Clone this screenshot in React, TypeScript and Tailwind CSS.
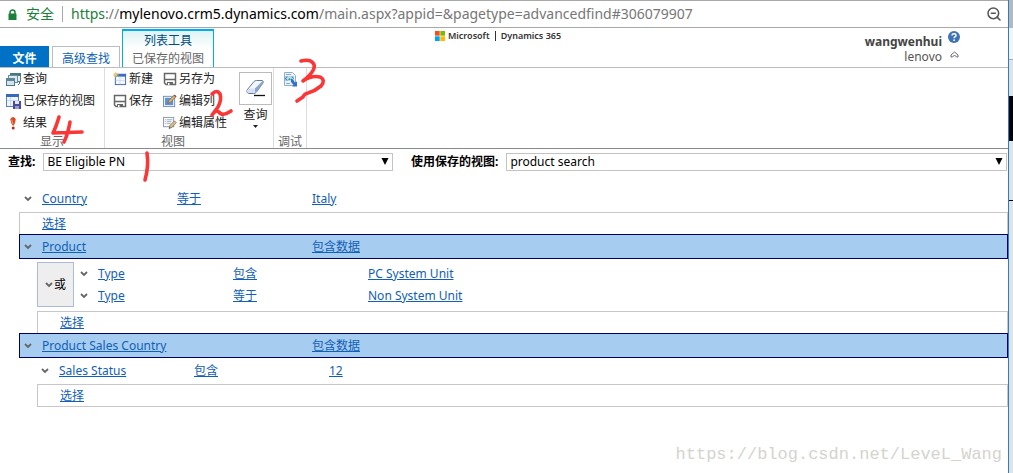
import type { ReactNode } from "react"
import { ZoomOut } from "lucide-react"

const WindowsIcon = () => (
  <svg width="15" height="15" viewBox="0 0 15 15" aria-hidden="true">
    <rect x="4.5" y="1.5" width="10" height="8" fill="#e8f0f4" stroke="#55808c" />
    <rect x="4" y="1" width="11" height="3" fill="#4a7584" />
    <rect x="2.5" y="3.5" width="9" height="7" fill="#dce9ee" stroke="#6b8f9a" />
    <rect x="0.5" y="6.5" width="8" height="7" fill="#d5e4ea" stroke="#4c7c8c" />
    <rect x="0" y="6" width="9" height="3" fill="#5d8797" />
    <path d="M12 9l2 2-2 2" stroke="#3c7a8c" fill="none" />
  </svg>
)

const SavedViewIcon = () => (
  <svg width="15" height="15" viewBox="0 0 15 15" aria-hidden="true">
    <rect x="0.5" y="0.5" width="12" height="12" fill="#eef4fb" stroke="#5e83c4" />
    <rect x="0" y="0" width="13" height="3" fill="#3868c0" />
    <path d="M4.5 3v9M1 6.5h11" stroke="#cbdaf0" />
    <rect x="7" y="7" width="8" height="8" fill="#4b4a9c" />
    <rect x="9" y="7" width="4" height="3" fill="#e6e6f6" />
    <rect x="9" y="12" width="4" height="3" fill="#9a9ad0" />
  </svg>
)

const ResultIcon = () => (
  <svg width="15" height="15" viewBox="0 0 15 15" aria-hidden="true">
    <path d="M4.3 3.5Q4.7 1 7 1T9.7 3.5Q9.3 7 7.8 9.5H6.6Q4.8 7 4.3 3.5z" fill="#dc4a24" />
    <path d="M5.8 3.6Q6 6 7 8" stroke="#f5a078" fill="none" />
    <circle cx="7.2" cy="12" r="1.5" fill="#b83018" />
  </svg>
)

const NewIcon = () => (
  <svg width="14" height="14" viewBox="0 0 15 15" aria-hidden="true">
    <rect x="2.5" y="2.5" width="11" height="11" fill="#f2f7fd" stroke="#3b62ac" />
    <rect x="2" y="2" width="12" height="3" fill="#3f6cc0" />
    <path d="M7.5 5v8M3 9h10" stroke="#cfdcf0" />
    <path d="M3 0v6M0 3h6M1 1l4 4M5 1L1 5" stroke="#edc85a" />
  </svg>
)

const DiskIcon = () => (
  <svg width="14" height="14" viewBox="0 0 14 14" aria-hidden="true">
    <path d="M1.5 1.5h11v11H3l-1.500-1.500z" fill="#fff" stroke="#666" strokeWidth="1.5" />
    <path d="M1.5 7.5h11" stroke="#666" strokeWidth="1.5" />
    <path d="M4 10h6v3H4z" fill="#666" />
    <path d="M5 11h1.5v2H5z" fill="#fff" />
  </svg>
)

const EditColumnIcon = () => (
  <svg width="14" height="14" viewBox="0 0 15 15" aria-hidden="true">
    <rect x="0.5" y="2.5" width="12" height="11" fill="#fff" stroke="#6b8cc0" />
    <rect x="2" y="4" width="9" height="8" fill="#5e92de" />
    <path d="M5 10l1.2-3L12 1.2l1.8 1.8L8 9z" fill="#dcb56c" stroke="#76582a" strokeWidth="0.7" />
    <path d="M12 1l2 2" stroke="#9c4b3c" strokeWidth="1.5" />
  </svg>
)

const EditPropsIcon = () => (
  <svg width="14" height="14" viewBox="0 0 15 15" aria-hidden="true">
    <rect x="0.5" y="1.5" width="11" height="10" fill="#f6f8fa" stroke="#8a97aa" />
    <path d="M2 4h1M4 4h6M2 6h1M4 6h5M2 8h1M4 8h4" stroke="#a2adbd" />
    <path d="M6.5 13.5l1-3.5 4.8-4.8 2 2L9.7 12z" fill="#d6bd8c" stroke="#74664c" strokeWidth="0.7" />
    <path d="M6.5 13.5l.5-1.6 1.1 1z" fill="#333" />
  </svg>
)

const EraserIcon = () => (
  <svg width="24" height="24" viewBox="0 0 24 24" aria-hidden="true">
    <path d="M3 13L10 4.5Q11 3.5 12.5 3.5H18Q20 4 19 6L12.5 15Q11.5 16.5 9.500 16.5H5Q2 16 3 13z" fill="#f3f7fc" stroke="#66799b" />
    <path d="M12.5 15L19 6Q19.5 4.5 18.5 4L11 11.5Q10.5 14 11 16.2z" fill="#8da5ca" />
    <path d="M3 13Q7 10.5 11 12L10.5 16H5Q2.5 15.5 3 13z" fill="#d5e0f0" />
    <path d="M10 18.5h11" stroke="#111" strokeWidth="1.3" />
  </svg>
)

const DebugIcon = () => (
  <svg width="15" height="15" viewBox="0 0 15 15" aria-hidden="true">
    <path d="M1.5 0.5h8l3 3v10h-11z" fill="#eaf3fb" stroke="#8bafd4" />
    <rect x="2" y="4" width="9" height="5" fill="#b5d9f0" />
    <path d="M4 4.5L2.5 6.5 4 8.5M9 4.5l1.5 2" stroke="#2f6496" fill="none" />
    <path d="M5 8l1.5-2L8 8z" fill="#3f9f55" />
    <path d="M3 11.5h4M3 2.5h5" stroke="#8bacca" />
    <path d="M8 6.5l2 1 2 3 2-1v5H9l1.5-1.5L8 10z" fill="#3470c8" />
  </svg>
)

const Chevron = () => (
  <svg width="8" height="6" viewBox="0 0 8 6" className="shrink-0" aria-hidden="true">
    <path d="M1 1l3 3 3-3" fill="none" stroke="#666" strokeWidth="1.8" />
  </svg>
)

function Tool({ icon, label }: { icon: ReactNode; label: string }) {
  return (
    <button className="flex h-[22px] shrink-0 items-center gap-0.5 whitespace-nowrap">
      {icon}
      {label}
    </button>
  )
}

function Picker({ id, value }: { id: string; value: string }) {
  return (
    <div className="relative flex-1">
      <select
        id={id}
        className="block h-[18px] w-full appearance-none border border-[#c3c3c3] bg-white pl-[3px] text-xs leading-4 text-black"
      >
        <option>{value}</option>
      </select>
      <svg
        width="8"
        height="7"
        viewBox="0 0 8 7"
        className="pointer-events-none absolute top-[5px] right-1"
        aria-hidden="true"
      >
        <path d="M0.5 0h7L4 7z" fill="#000" />
      </svg>
    </div>
  )
}

function Condition({ field, operator, value }: { field: string; operator?: string; value: string }) {
  return (
    <div className="flex h-[22px] items-center">
      <span className="flex w-[18px]">
        <Chevron />
      </span>
      <span className="w-[135px]">
        <a href="#" className="whitespace-nowrap underline">{field}</a>
      </span>
      <span className="w-[135px]">
        {operator && <a href="#" className="underline">{operator}</a>}
      </span>
      <a href="#" className="underline">{value}</a>
    </div>
  )
}

function Entity({ name }: { name: string }) {
  return (
    <div className="flex h-[25px] items-end border border-[#00005e] bg-[#a6ccf0] pl-1">
      <Condition field={name} value="包含数据" />
    </div>
  )
}

function SelectRow() {
  return (
    <div className="flex h-[22px] items-center border border-b-0 border-[#c6c6cb] pl-[22px]">
      <a href="#" className="underline">选择</a>
    </div>
  )
}

export default function App() {
  return (
    <div className="flex min-h-screen bg-white font-['Noto_Sans','Noto_Sans_CJK_SC',sans-serif] text-xs leading-4 text-[#222]">
      <main className="relative min-w-0 flex-1">
        <div className="flex h-7 items-center border-y border-[#a8a8a8] pr-1.5 pl-2">
          <svg width="9" height="11" viewBox="0 0 9 11" aria-hidden="true">
            <path d="M2 5V3.500a2.500 2.500 0 015 0V5" fill="none" stroke="#188038" strokeWidth="1.5" />
            <rect x="0.5" y="4.5" width="8" height="6.5" rx="0.5" fill="#188038" />
          </svg>
          <span className="ml-[9px] text-sm text-[#188038]">安全</span>
          <span className="mx-2 h-4 w-px bg-[#aaa]" />
          <span className="text-sm whitespace-nowrap text-[#777]">
            <span className="text-[#188038]">https</span>://<span className="text-black">mylenovo.crm5.dynamics.com</span>
            /main.aspx?appid=&amp;pagetype=advancedfind#306079907
          </span>
          <ZoomOut className="ml-auto text-[#555]" size={16} strokeWidth={2.3} />
        </div>

        <header className="flex h-10 border-b border-[#b9bdc2]">
          <nav className="flex flex-1 items-end gap-[3px]">
            <button className="h-[21px] w-[49px] bg-[#0072c6] pt-1 font-bold text-white">文件</button>
            <button className="h-[21px] w-[68px] border border-b-0 border-[#b9bdc2] pt-1 text-[#0a64b4]">高级查找</button>
            <button className="-ml-px h-[38px] w-[92px] border border-t-2 border-b-0 border-[#00aeef] bg-linear-to-b from-[#dff3f3] to-white to-50% text-[#666]">
              <span className="block h-[19px] leading-[20px] text-[#004b85]">列表工具</span>
              <span className="block leading-[18px]">已保存的视图</span>
            </button>
          </nav>
          <div className="ml-9 flex items-center gap-[3px] self-start text-[9px] leading-4 font-semibold text-[#333]">
            <svg width="10" height="10" viewBox="0 0 10 10" aria-hidden="true">
              <path d="M0 0h4.700v4.700H0z" fill="#f25022" />
              <path d="M5.300 0H10v4.700H5.300z" fill="#7fba00" />
              <path d="M0 5.300h4.700V10H0z" fill="#00a4ef" />
              <path d="M5.300 5.300H10V10H5.300z" fill="#ffb900" />
            </svg>
            Microsoft
            <span className="mx-0.5 h-2.5 w-px bg-[#333]" />
            Dynamics 365
          </div>
          <div className="flex flex-1 justify-end gap-1.5 pr-12">
            <div className="pt-1.5 text-right leading-[15px] text-[#555]">
              <p className="font-bold text-[#444]">wangwenhui</p>
              <p>lenovo</p>
            </div>
            <div className="flex flex-col items-center gap-2 pt-[3px]">
              <button aria-label="Help">
                <svg width="12" height="12" viewBox="0 0 12 12" aria-hidden="true">
                  <circle cx="6" cy="6" r="6" fill="#3f73b5" />
                  <path d="M4 4.5Q4 2.7 6 2.7T8 4.4Q8 5.3 6.9 5.9Q6.1 6.3 6.1 7.3" fill="none" stroke="#fff" strokeWidth="1.4" />
                  <circle cx="6.1" cy="9.2" r="0.9" fill="#fff" />
                </svg>
              </button>
              <button aria-label="Collapse ribbon">
                <svg width="9" height="7" viewBox="0 0 9 7" aria-hidden="true">
                  <path d="M1 4l3.500-3L8 4v2H6.500l-2-2-2 2H1z" fill="none" stroke="#667" />
                </svg>
              </button>
            </div>
          </div>
        </header>

        <section className="flex h-[81px] border-b border-[#8a8a8a]">
          <div className="flex w-[105px] flex-col border-r border-[#ddd] pl-1.5">
            <Tool icon={<WindowsIcon />} label="查询" />
            <Tool icon={<SavedViewIcon />} label="已保存的视图" />
            <Tool icon={<ResultIcon />} label="结果" />
            <p className="-ml-1.5 text-center leading-[15px] text-[#666]">显示</p>
          </div>
          <div className="flex w-[169px] flex-col border-r border-[#ddd]">
            <div className="flex h-[66px] shrink-0 pl-2">
              <div className="w-[50px]">
                <Tool icon={<NewIcon />} label="新建" />
                <Tool icon={<DiskIcon />} label="保存" />
              </div>
              <div className="w-[76px]">
                <Tool icon={<DiskIcon />} label="另存为" />
                <Tool icon={<EditColumnIcon />} label="编辑列" />
                <Tool icon={<EditPropsIcon />} label="编辑属性" />
              </div>
              <button className="flex flex-col items-center pt-1">
                <span className="flex size-[33px] items-center justify-center border border-[#bbb]">
                  <EraserIcon />
                </span>
                <span className="leading-5">查询</span>
                <svg width="5" height="3" viewBox="0 0 5 3" aria-hidden="true">
                  <path d="M0 0h5L2.500 3z" fill="#222" />
                </svg>
              </button>
            </div>
            <p className="pr-8 text-center leading-[15px] text-[#666]">视图</p>
          </div>
          <div className="flex w-[33px] flex-col items-center border-r border-[#ddd]">
            <button className="flex h-[66px] shrink-0 items-start pt-1" aria-label="下载提取 XML">
              <DebugIcon />
            </button>
            <p className="leading-[15px] text-[#666]">调试</p>
          </div>
        </section>

        <section className="flex items-center gap-[18px] py-1 pr-px pl-2">
          <div className="flex w-[385px] items-center gap-2">
            <label htmlFor="entity" className="font-bold text-black">查找:</label>
            <Picker id="entity" value="BE Eligible PN" />
          </div>
          <div className="flex flex-1 items-center gap-2">
            <label htmlFor="view" className="font-bold text-black">使用保存的视图:</label>
            <Picker id="view" value="product search" />
          </div>
        </section>

        <section className="pt-[13px] pl-[19px] text-[#1160b7]">
          <div className="pb-0.5 pl-[5px]">
            <Condition field="Country" operator="等于" value="Italy" />
          </div>
          <SelectRow />
          <Entity name="Product" />
          <div className="pl-[18px]">
            <div className="flex items-end gap-1.5 pt-[3px] pb-1">
              <button className="flex h-[45px] w-[37px] items-center justify-center gap-px border border-[#a9bbd6] bg-[#eee] text-black">
                <Chevron />
                或
              </button>
              <div>
                <Condition field="Type" operator="包含" value="PC System Unit" />
                <Condition field="Type" operator="等于" value="Non System Unit" />
              </div>
            </div>
            <SelectRow />
          </div>
          <Entity name="Product Sales Country" />
          <div className="pl-[18px]">
            <div className="py-0.5 pl-1">
              <Condition field="Sales Status" operator="包含" value="12" />
            </div>
            <div className="border-b border-[#c6c6cb]">
              <SelectRow />
            </div>
          </div>
        </section>

        <p className="absolute right-1.5 bottom-1.5 font-['Liberation_Mono',monospace] text-[17px] leading-6 text-[#d4d4ce]">
          https://blog.csdn.net/LeveL_Wang
        </p>

        <svg
          width="340"
          height="190"
          viewBox="0 0 340 190"
          className="pointer-events-none absolute top-0 left-0"
          fill="none"
          stroke="#fa3636"
          strokeWidth="3.6"
          strokeLinecap="round"
          strokeLinejoin="round"
          aria-hidden="true"
        >
          <path d="M147 153Q149 166 145 180" />
          <path d="M212 94Q217 89 220 94Q222 99 218 107L212 115Q216 109 219 112Q222 117 231 111" />
          <path d="M301 61Q310 59 313 63Q318 69 303 81Q312 75 320 77Q326 80 321 86Q315 91 308 93Q304 94 303 97L297 101" />
          <path d="M59 117Q56 127 53 133L82 132M70 122Q68 134 64 142" />
        </svg>
      </main>

      <aside className="w-[5px] border-l border-[#1883d7] bg-[#e2e2e2]">
        <div className="h-7 bg-[#b8b8b8]" />
        <div className="h-8 border-b border-[#aaa] bg-[#f4f4f4]" />
        <div className="mt-9 h-[45px] bg-black" />
        <div className="h-[60px] border-b border-black" />
      </aside>
    </div>
  )
}
